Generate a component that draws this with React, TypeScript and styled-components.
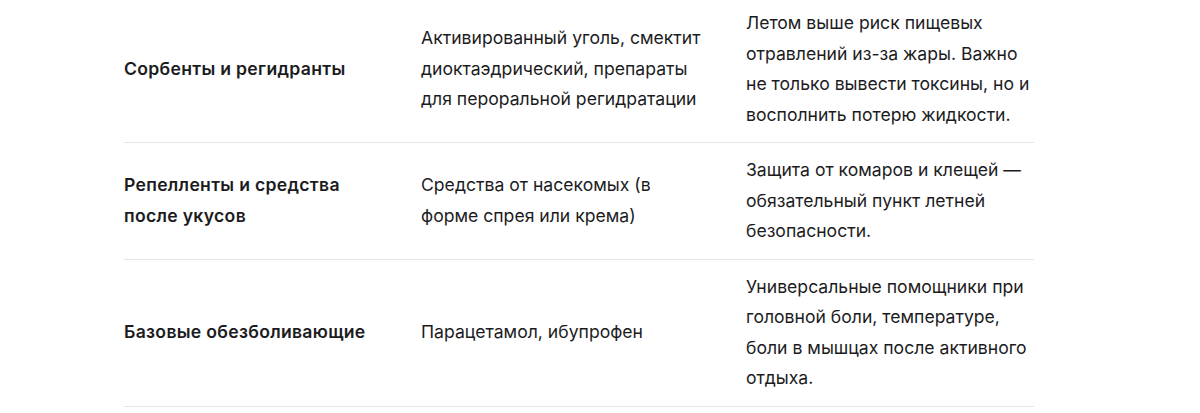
import * as React from "react";
import styled, { createGlobalStyle } from "styled-components";

const GlobalStyle = createGlobalStyle`
  html, body {
    margin: 0;
    padding: 0;
    background: #ffffff;
  }
  body {
    font-family: Inter, "Noto Sans", "Liberation Sans", sans-serif;
    color: #1c1c1e;
    -webkit-font-smoothing: antialiased;
  }
`;

const ROWS = [
  {
    group: "Сорбенты и регидранты",
    items:
      "Активированный уголь, смектит диоктаэдрический, препараты для пероральной регидратации",
    why: "Летом выше риск пищевых отравлений из-за жары. Важно не только вывести токсины, но и восполнить потерю жидкости.",
  },
  {
    group: "Репелленты и средства после укусов",
    items: "Средства от насекомых (в форме спрея или крема)",
    why: "Защита от комаров и клещей — обязательный пункт летней безопасности.",
  },
  {
    group: "Базовые обезболивающие",
    items: "Парацетамол, ибупрофен",
    why: "Универсальные помощники при головной боли, температуре, боли в мышцах после активного отдыха.",
  },
];

function App() {
  return (
    <Page>
      <GlobalStyle />
      <Table>
        <colgroup>
          <col style={{ width: 297 }} />
          <col style={{ width: 325 }} />
          <col style={{ width: 288 }} />
        </colgroup>
        <tbody>
          {ROWS.map((row) => (
            <Row key={row.group}>
              <Cell $bold>{row.group}</Cell>
              <Cell>{row.items}</Cell>
              <Cell $last>{row.why}</Cell>
            </Row>
          ))}
        </tbody>
      </Table>
    </Page>
  );
}

const Page = styled.div`
  padding-left: 124px;
  margin-top: -4px;
`;

const Table = styled.table`
  width: 910px;
  table-layout: fixed;
  border-collapse: collapse;
`;

const Row = styled.tr`
  border-bottom: 1px solid #e6e6e6;
`;

const Cell = styled.td<{ $bold?: boolean; $last?: boolean }>`
  padding: 12px ${(p) => (p.$last ? "0" : "40px")} 12px 0;
  vertical-align: middle;
  font-size: 17.6px;
  line-height: 30.5px;
  font-weight: ${(p) => (p.$bold ? 600 : 400)};
  letter-spacing: ${(p) => (p.$bold ? "0.3px" : "0")};
  color: #1c1c1e;
`;

export default App;
